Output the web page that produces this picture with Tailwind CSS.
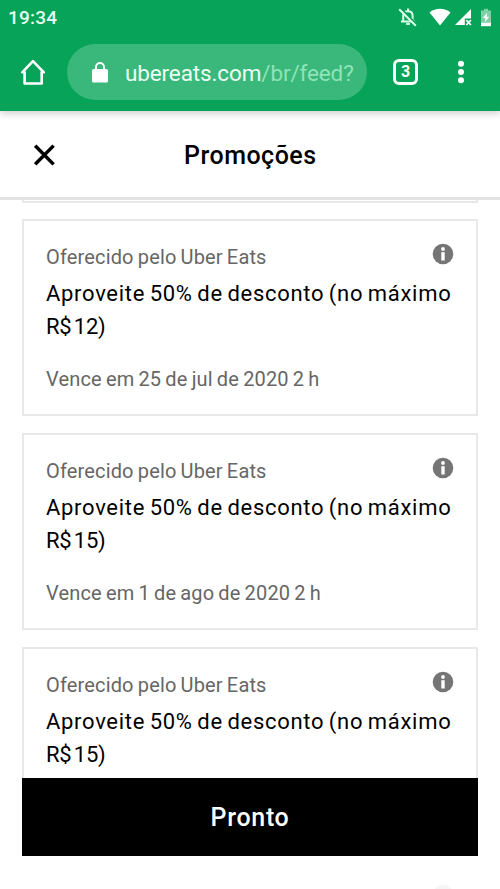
<!DOCTYPE html>
<html lang="pt-BR">
<head>
<meta charset="utf-8">
<title>Promoções</title>
<script src="https://cdn.jsdelivr.net/npm/@tailwindcss/browser@4"></script>
</head>
<body class="w-[500px] h-[889px] overflow-hidden bg-white font-['Roboto',sans-serif]">
<div class="relative flex h-[889px] w-[500px] flex-col overflow-hidden">
  <header class="relative z-20 h-[111px] shrink-0 bg-[#06a358] shadow-[0_2px_8px_rgba(0,0,0,0.22)]">
    <div class="flex h-[34px] items-center justify-between pl-[8px] pr-[8px]">
      <span class="pt-px text-[19px] font-medium leading-[34px] tracking-[0.2px] text-[#e4fff0]">19:34</span>
      <div class="flex h-[34px] items-center">
        <svg class="h-[20px] w-[20px]" viewBox="0 0 20 20" fill="none" stroke="#d9ffe9" stroke-width="2">
          <path d="M5.200 14V8.600c0-2.400 1.700-4.400 4.700-4.400s4.700 2 4.700 4.400V14M3 14.500h14M10 1.500v2"/>
          <path d="M8.200 17h3.600" stroke-width="2"/>
          <path d="M2.500 1.200 18.500 17.300" stroke="#06a358" stroke-width="2"/>
          <path d="M1.200 2.200 17.800 18.700"/>
        </svg>
        <svg class="ml-[11px] h-[18px] w-[22px]" viewBox="0 0 22 18" fill="#fff"><path d="M.5 4.500C3.500 2 7 .8 11 .8s7.500 1.200 10.500 3.700L11 17.500z"/></svg>
        <svg class="ml-[4px] h-[18px] w-[17px]" viewBox="0 0 17 18"><path d="M16 1v9.500H9.800V17H0z" fill="#fff"/><path d="m11.300 12.200 4.600 4.800m0-4.800L11.300 17" stroke="#fff" stroke-width="1.700"/></svg>
        <svg class="ml-[8px] h-[19px] w-[12px]" viewBox="0 0 12 19"><path d="M4 .7h4v1.800h3v12.200H1V2.500h3z" fill="#7fd0a6"/><path d="M1 14.600h10v3.600H1z" fill="#fff"/><path d="M7.200 4.500 2.900 10h2.600l-.7 4.200L9.200 8.800H6.500z" fill="#fff"/></svg>
      </div>
    </div>
    <div class="mt-[10px] flex h-[56px] items-center pl-[20px]">
      <svg class="h-[28px] w-[26px]" viewBox="0 0 26 28" fill="none" stroke="#fff" stroke-width="2.600" stroke-linejoin="round" stroke-linecap="round"><path d="M2.200 14.300 13 3.200l10.800 11.100h-2.100v11.200H4.600V14.300z"/></svg>
      <div class="ml-[21px] flex h-[56px] w-[300px] items-center rounded-full bg-[#3ab77a] pl-[25px]">
        <svg class="h-[21px] w-[16px]" viewBox="0 0 16 21"><path d="M4 9V5a4 4 0 0 1 8 0V9" fill="none" stroke="#fff" stroke-width="1.900"/><rect y="7" width="16" height="13.500" rx="1.600" fill="#fff"/></svg>
        <span class="ml-[17px] whitespace-nowrap pt-[3px] text-[22.500px] leading-[53px] tracking-[-0.130px] text-[#8fe3b8]"><span class="text-[#eafff3]">ubereats.com</span>/br/feed?</span>
      </div>
      <div class="ml-[26px] flex h-[26px] w-[25px] items-center justify-center rounded-[6px] border-[3px] border-white text-[16px] font-bold text-white">3</div>
      <svg class="ml-[39px] h-[26px] w-[8px]" viewBox="0 0 8 26" fill="#fff"><circle cx="4" cy="4.700" r="3"/><circle cx="4" cy="13" r="3"/><circle cx="4" cy="21.300" r="3"/></svg>
    </div>
  </header>
  <div class="relative z-10 flex h-[89px] shrink-0 items-center border-b-[3px] border-[#e2e2e2] bg-white pl-[34px]">
    <svg class="mt-[2px] h-[22px] w-[21px]" viewBox="0 0 21 22" stroke="#000" stroke-width="3.500" fill="none"><path d="m1.200 1.600 18.400 18.800m0-18.800L1.200 20.400"/></svg>
    <h1 class="ml-[129px] mt-[4px] text-[25px] font-medium tracking-[0.500px] text-black">Promoções</h1>
  </div>
  <main class="flex flex-1 flex-col px-[22px]">
    <div class="h-[3px] shrink-0 border-x-2 border-b-2 border-[#e8e8e8]"></div>
    <div class="mt-[16px] flex flex-col gap-[17px]">
      <section class="flex h-[197px] shrink-0 flex-col border-2 border-[#e8e8e8] pl-[22px] pt-[20px] whitespace-nowrap">
        <div class="flex h-[32px] justify-between pr-[22px]">
          <span class="pt-px text-[20px] leading-[31px] tracking-[0.150px] [word-spacing:-1px] text-[#666]">Oferecido pelo Uber Eats</span>
          <svg class="mt-[2px] h-[22px] w-[22px]" viewBox="0 0 22 22"><circle cx="11" cy="11" r="10.300" fill="#757575"/><path d="M9.300 9.200h3.400v8.300H9.300z" fill="#fff"/><circle cx="11" cy="6" r="1.900" fill="#fff"/></svg>
        </div>
        <p class="mt-[4px] text-[22px] leading-[33px] tracking-[0.700px] [word-spacing:-1.5px] text-black">Aproveite 50% de desconto (no máximo<br><span class="tracking-[-0.200px] [word-spacing:-3px]">R$ 12)</span></p>
        <p class="mt-[21px] text-[20px] leading-[30px] tracking-[0.150px] [word-spacing:-1px] text-[#666]">Vence em 25 de jul de 2020 2 h</p>
      </section>
      <section class="flex h-[197px] shrink-0 flex-col border-2 border-[#e8e8e8] pl-[22px] pt-[20px] whitespace-nowrap">
        <div class="flex h-[32px] justify-between pr-[22px]">
          <span class="pt-px text-[20px] leading-[31px] tracking-[0.150px] [word-spacing:-1px] text-[#666]">Oferecido pelo Uber Eats</span>
          <svg class="mt-[2px] h-[22px] w-[22px]" viewBox="0 0 22 22"><circle cx="11" cy="11" r="10.300" fill="#757575"/><path d="M9.300 9.200h3.400v8.300H9.300z" fill="#fff"/><circle cx="11" cy="6" r="1.900" fill="#fff"/></svg>
        </div>
        <p class="mt-[4px] text-[22px] leading-[33px] tracking-[0.700px] [word-spacing:-1.5px] text-black">Aproveite 50% de desconto (no máximo<br><span class="tracking-[-0.200px] [word-spacing:-3px]">R$ 15)</span></p>
        <p class="mt-[21px] text-[20px] leading-[30px] tracking-[0.150px] [word-spacing:-1px] text-[#666]">Vence em 1 de ago de 2020 2 h</p>
      </section>
      <section class="flex h-[131px] shrink-0 flex-col border-2 border-b-0 border-[#e8e8e8] pl-[22px] pt-[20px] whitespace-nowrap">
        <div class="flex h-[32px] justify-between pr-[22px]">
          <span class="pt-px text-[20px] leading-[31px] tracking-[0.150px] [word-spacing:-1px] text-[#666]">Oferecido pelo Uber Eats</span>
          <svg class="mt-[2px] h-[22px] w-[22px]" viewBox="0 0 22 22"><circle cx="11" cy="11" r="10.300" fill="#757575"/><path d="M9.300 9.200h3.400v8.300H9.300z" fill="#fff"/><circle cx="11" cy="6" r="1.900" fill="#fff"/></svg>
        </div>
        <p class="mt-[4px] text-[22px] leading-[33px] tracking-[0.700px] [word-spacing:-1.5px] text-black">Aproveite 50% de desconto (no máximo<br><span class="tracking-[-0.200px] [word-spacing:-3px]">R$ 15)</span></p>
      </section>
    </div>
    <button class="h-[78px] shrink-0 bg-black pt-px text-[25px] font-medium tracking-[0.700px] text-white">Pronto</button>
    <div class="flex h-[33px] items-end justify-end overflow-hidden pr-[24px]"><div class="-mb-[18px] h-[22px] w-[22px] rounded-full bg-[#f5f5f5]"></div></div>
  </main>
</div>
</body>
</html>
